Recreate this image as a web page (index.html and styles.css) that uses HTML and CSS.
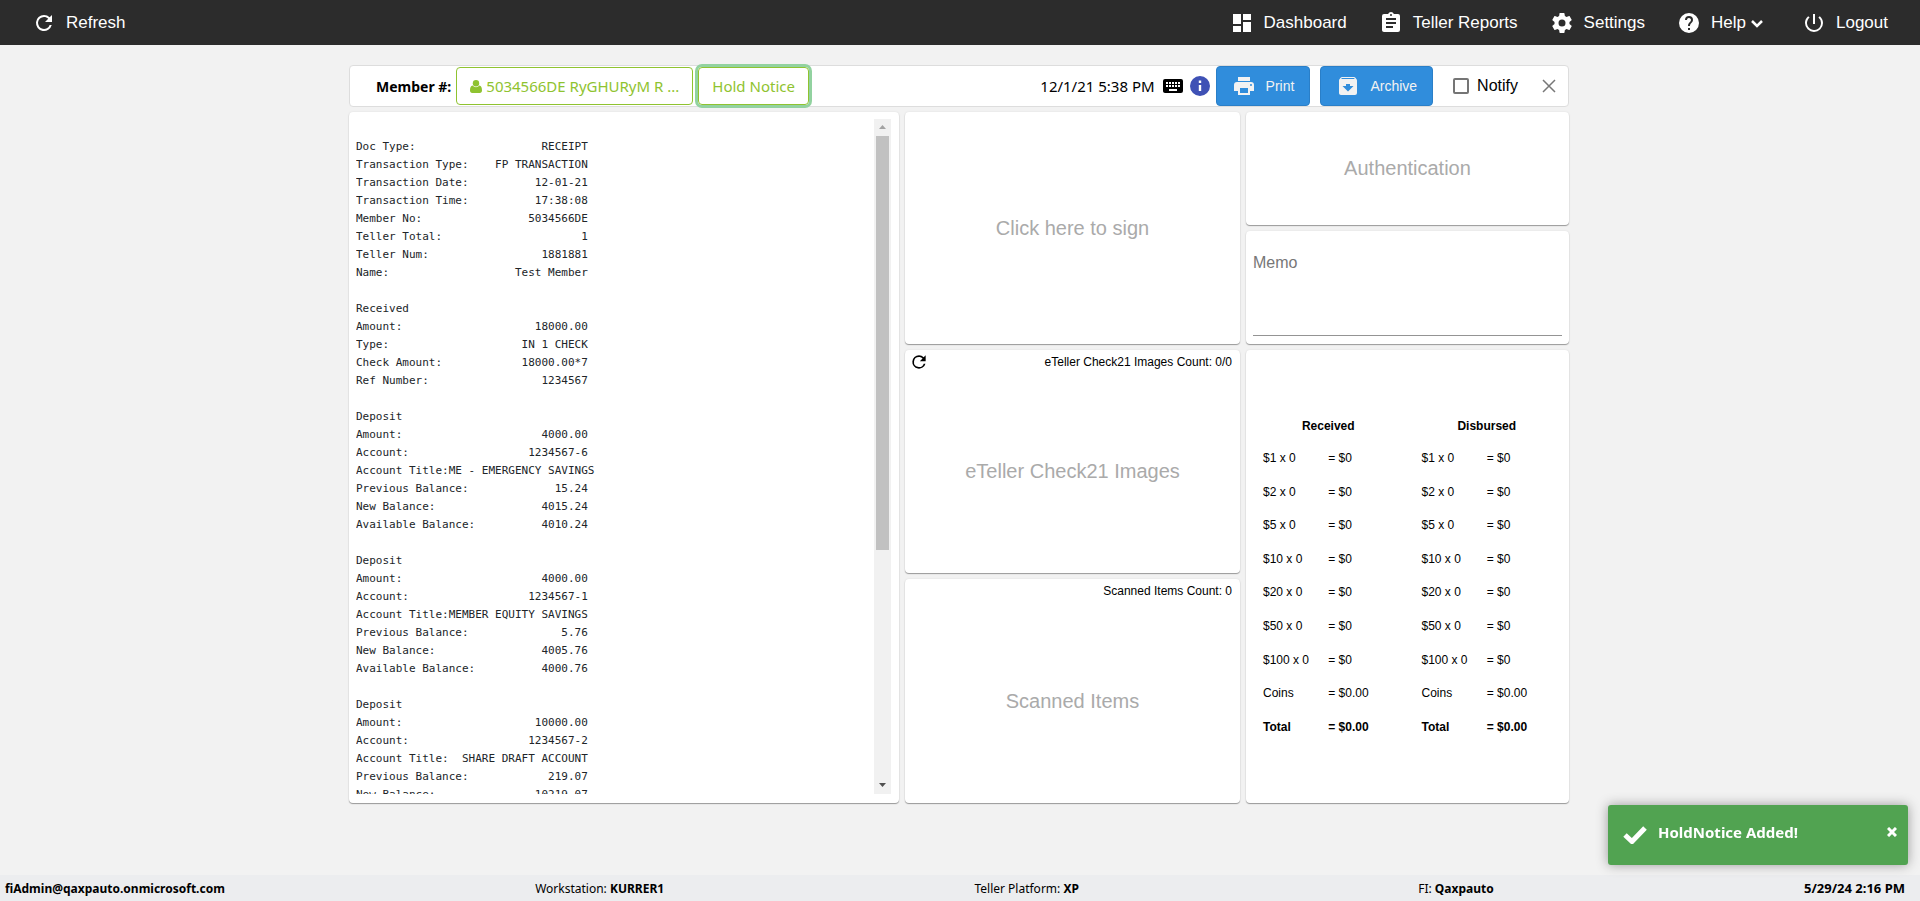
FILE: index.html
```html
<!DOCTYPE html>
<html lang="en">
<head>
<meta charset="utf-8">
<title>Teller Receipt</title>
<link rel="stylesheet" href="styles.css">
</head>
<body>
<header class="topbar">
  <button class="nav-item" type="button"><svg class="icon" viewBox="0 0 24 24"><path d="M17.65 6.35A7.96 7.96 0 0 0 12 4a8 8 0 1 0 7.73 10h-2.08A6 6 0 1 1 12 6c1.66 0 3.14.69 4.22 1.78L13 11h7V4z"/></svg>Refresh</button>
  <nav class="nav">
    <a class="nav-item" href="#"><svg class="icon" viewBox="0 0 24 24"><path d="M3 13h8V3H3v10zm0 8h8v-6H3v6zm10 0h8V11h-8v10zm0-18v6h8V3h-8z"/></svg>Dashboard</a>
    <a class="nav-item" href="#"><svg class="icon" viewBox="0 0 24 24"><path d="M19 3h-4.18C14.4 1.84 13.3 1 12 1s-2.4.84-2.82 2H5a2 2 0 0 0-2 2v14c0 1.100.9 2 2 2h14a2 2 0 0 0 2-2V5a2 2 0 0 0-2-2zm-7 0a1 1 0 1 1 0 2 1 1 0 0 1 0-2zm2 14H7v-2h7v2zm3-4H7v-2h10v2zm0-4H7V7h10v2z"/></svg>Teller Reports</a>
    <a class="nav-item" href="#"><svg class="icon" viewBox="0 0 24 24"><path d="M19.430 12.980c.04-.32.07-.64.07-.98s-.03-.66-.07-.98l2.110-1.650c.19-.15.24-.42.12-.64l-2-3.460c-.12-.22-.39-.3-.61-.22l-2.490 1c-.52-.4-1.080-.73-1.690-.98l-.38-2.650A.49.49 0 0 0 14 2h-4c-.25 0-.46.18-.49.42l-.38 2.650c-.61.25-1.170.59-1.690.98l-2.490-1c-.23-.09-.49 0-.61.22l-2 3.460c-.13.22-.07.49.12.64l2.110 1.650c-.04.32-.07.65-.07.98s.03.66.07.98l-2.110 1.650c-.19.15-.24.42-.12.64l2 3.460c.12.22.39.3.61.22l2.490-1c.52.4 1.080.73 1.690.98l.38 2.650c.03.24.24.42.49.42h4c.25 0 .46-.18.49-.42l.38-2.650c.61-.25 1.170-.59 1.690-.98l2.490 1c.23.09.49 0 .61-.22l2-3.460c.12-.22.07-.49-.12-.64l-2.110-1.650zM12 15.500a3.500 3.500 0 1 1 0-7 3.500 3.500 0 0 1 0 7z"/></svg>Settings</a>
    <a class="nav-item" href="#"><svg class="icon" viewBox="0 0 24 24"><path d="M12 2a10 10 0 1 0 0 20 10 10 0 0 0 0-20zm1 17h-2v-2h2v2zm2.070-7.750l-.9.92C13.450 12.900 13 13.500 13 15h-2v-.5c0-1.100.45-2.100 1.170-2.830l1.240-1.260A2 2 0 1 0 10 9H8a4 4 0 1 1 8 0c0 .88-.36 1.680-.93 2.250z"/></svg>Help<svg class="chevron" viewBox="0 0 14 10"><path d="M2 2l5 5 5-5"/></svg></a>
    <a class="nav-item" href="#"><svg class="icon" viewBox="0 0 24 24"><path d="M13 3h-2v10h2V3zm4.830 2.170l-1.420 1.420A6.920 6.920 0 0 1 19 12a7 7 0 1 1-11.420-5.420L6.170 5.170A8.930 8.930 0 0 0 3 12a9 9 0 1 0 18 0c0-2.740-1.230-5.180-3.170-6.830z"/></svg>Logout</a>
  </nav>
</header>

<main class="main">
  <section class="toolbar">
    <span class="member-label">Member #:</span>
    <button class="outline-btn member-btn" type="button"><svg class="user" viewBox="0 0 12 13"><circle cx="6" cy="3.200" r="3.200"/><path d="M2.600 5.600C.8 5.800 0 7.800 0 10.600 0 12 .9 13 2.200 13h7.600c1.300 0 2.200-1 2.200-2.400 0-2.800-.8-4.800-2.600-5a4.400 4.400 0 0 1-6.800 0z"/></svg>5034566DE RyGHURyM R ...</button>
    <button class="outline-btn focused" type="button">Hold Notice</button>
    <span class="date">12/1/21 5:38 PM</span>
    <svg class="icon keyboard" viewBox="0 0 24 24"><path d="M20 5H4a2 2 0 0 0-2 2v10c0 1.100.9 2 2 2h16a2 2 0 0 0 2-2V7a2 2 0 0 0-2-2zm-9 3h2v2h-2V8zm0 3h2v2h-2v-2zM8 8h2v2H8V8zm0 3h2v2H8v-2zm-1 2H5v-2h2v2zm0-3H5V8h2v2zm9 7H8v-2h8v2zm0-4h-2v-2h2v2zm0-3h-2V8h2v2zm3 3h-2v-2h2v2zm0-3h-2V8h2v2z"/></svg>
    <svg class="icon info" viewBox="0 0 24 24"><path d="M12 2a10 10 0 1 0 0 20 10 10 0 0 0 0-20zm1.200 15h-2.400v-6h2.400v6zm0-8h-2.400V6.600h2.400V9z"/></svg>
    <button class="blue-btn" type="button"><svg class="icon" viewBox="0 0 24 24"><path d="M19 8H5a3 3 0 0 0-3 3v6h4v4h12v-4h4v-6a3 3 0 0 0-3-3zm-3 11H8v-5h8v5zm3-7a1 1 0 1 1 0-2 1 1 0 0 1 0 2zm-1-9H6v4h12V3z"/></svg>Print</button>
    <button class="blue-btn archive" type="button"><svg class="icon" viewBox="0 0 24 24"><path d="M20.540 5.230l-1.390-1.680A1.450 1.450 0 0 0 18 3H6c-.47 0-.88.21-1.160.55L3.460 5.230C3.170 5.570 3 6.020 3 6.500V19c0 1.100.9 2 2 2h14a2 2 0 0 0 2-2V6.500c0-.48-.17-.93-.46-1.270zM12 17.500L6.500 12H10v-2h4v2h3.500L12 17.500zM5.120 5l.81-1h12l.94 1H5.120z"/></svg>Archive</button>
    <label class="notify"><input class="check" type="checkbox">Notify</label>
    <button class="close" type="button" aria-label="Close"><svg class="close-icon" viewBox="0 0 14 14"><path d="M1 1l12 12M13 1L1 13"/></svg></button>
  </section>

  <div class="panels">
    <section class="panel receipt">
<pre class="receipt-text">

Doc Type:                   RECEIPT
Transaction Type:    FP TRANSACTION
Transaction Date:          12-01-21
Transaction Time:          17:38:08
Member No:                5034566DE
Teller Total:                     1
Teller Num:                 1881881
Name:                   Test Member

Received
Amount:                    18000.00
Type:                    IN 1 CHECK
Check Amount:            18000.00*7
Ref Number:                 1234567

Deposit
Amount:                     4000.00
Account:                  1234567-6
Account Title:ME - EMERGENCY SAVINGS
Previous Balance:             15.24
New Balance:                4015.24
Available Balance:          4010.24

Deposit
Amount:                     4000.00
Account:                  1234567-1
Account Title:MEMBER EQUITY SAVINGS
Previous Balance:              5.76
New Balance:                4005.76
Available Balance:          4000.76

Deposit
Amount:                    10000.00
Account:                  1234567-2
Account Title:  SHARE DRAFT ACCOUNT
Previous Balance:            219.07
New Balance:               10219.07
</pre>
      <div class="scrollbar">
        <svg class="arrow up" viewBox="0 0 17 17"><path d="M5 10l3.500-4 3.500 4z"/></svg>
        <div class="track"><div class="thumb"></div></div>
        <svg class="arrow" viewBox="0 0 17 17"><path d="M5 6h7l-3.500 4z"/></svg>
      </div>
    </section>

    <section class="panel sign"><span class="hint">Click here to sign</span></section>

    <section class="panel auth"><span class="hint">Authentication</span></section>

    <section class="panel memo"><textarea class="memo-input" placeholder="Memo" aria-label="Memo"></textarea></section>

    <section class="panel images">
      <div class="panel-head"><button class="reload" type="button" aria-label="Reload images"><svg class="reload-icon" viewBox="0 0 24 24"><path d="M17.650 6.350A7.960 7.960 0 0 0 12 4a8 8 0 1 0 7.730 10h-2.080A6 6 0 1 1 12 6c1.660 0 3.140.69 4.220 1.780L13 11h7V4z"/></svg></button><span class="count">eTeller Check21 Images Count: 0/0</span></div>
      <span class="hint">eTeller Check21 Images</span>
    </section>

    <section class="panel scanned">
      <div class="panel-head"><span class="count">Scanned Items Count: 0</span></div>
      <span class="hint">Scanned Items</span>
    </section>

    <section class="panel cash">
      <table class="cash-table">
        <thead><tr><th colspan="2">Received</th><th colspan="2">Disbursed</th></tr></thead>
        <tbody>
          <tr><td>$1 x 0</td><td>= $0</td><td>$1 x 0</td><td>= $0</td></tr>
          <tr><td>$2 x 0</td><td>= $0</td><td>$2 x 0</td><td>= $0</td></tr>
          <tr><td>$5 x 0</td><td>= $0</td><td>$5 x 0</td><td>= $0</td></tr>
          <tr><td>$10 x 0</td><td>= $0</td><td>$10 x 0</td><td>= $0</td></tr>
          <tr><td>$20 x 0</td><td>= $0</td><td>$20 x 0</td><td>= $0</td></tr>
          <tr><td>$50 x 0</td><td>= $0</td><td>$50 x 0</td><td>= $0</td></tr>
          <tr><td>$100 x 0</td><td>= $0</td><td>$100 x 0</td><td>= $0</td></tr>
          <tr><td>Coins</td><td>= $0.00</td><td>Coins</td><td>= $0.00</td></tr>
          <tr class="total"><td>Total</td><td>= $0.00</td><td>Total</td><td>= $0.00</td></tr>
        </tbody>
      </table>
    </section>
  </div>
</main>

<footer class="footer">
  <b>fiAdmin@qaxpauto.onmicrosoft.com</b>
  <span>Workstation: <b>KURRER1</b></span>
  <span class="platform">Teller Platform: <b>XP</b></span>
  <span>FI: <b>Qaxpauto</b></span>
  <b class="clock">5/29/24 2:16 PM</b>
</footer>

<div class="toast" role="status">
  <svg class="tick" viewBox="0 0 24 18"><path d="M2 9l7 6.500L22 2"/></svg>
  <span class="toast-text">HoldNotice Added!</span>
  <button class="toast-close" type="button" aria-label="Dismiss"><svg class="toast-x" viewBox="0 0 10 10"><path d="M1 1l8 8M9 1L1 9"/></svg></button>
</div>
</body>
</html>
```
FILE: styles.css
```css
* {
  box-sizing: border-box;
}

body {
  margin: 0;
  height: 100vh;
  display: flex;
  flex-direction: column;
  overflow: hidden;
  background: #f2f2f2;
  color: #000;
  font-family: "Liberation Sans", Arial, sans-serif;
  font-size: 16px;
}

button {
  font: inherit;
  color: inherit;
  background: none;
  border: 0;
  padding: 0;
}

.icon {
  width: 24px;
  height: 24px;
  flex: none;
  fill: currentColor;
}

.topbar {
  height: 45px;
  flex: none;
  display: flex;
  align-items: center;
  justify-content: space-between;
  padding: 0 32px;
  background: #2c2c2c;
  color: #fff;
}

.nav {
  display: flex;
  gap: 32px;
}

.nav-item {
  display: flex;
  align-items: center;
  gap: 10px;
  color: #fff;
  font-size: 17px;
  text-decoration: none;
}

.chevron {
  width: 14px;
  height: 10px;
  margin: 2px 6px 0 -6px;
  fill: none;
  stroke: #fff;
  stroke-width: 2.500;
}

.main {
  flex: 1;
  min-height: 0;
  width: 100%;
  max-width: 1222px;
  margin: 0 auto;
  padding: 20px 2px 72px 0;
  display: flex;
  flex-direction: column;
  gap: 5px;
}

.toolbar {
  height: 42px;
  flex: none;
  display: flex;
  align-items: center;
  padding: 0 12px 0 26px;
  background: #fff;
  border: 1px solid #ddd;
  border-radius: 4px;
  font-family: "Noto Sans", sans-serif;
  font-size: 15px;
}

.member-label {
  font-size: 14px;
  font-weight: bold;
  margin-right: 5px;
}

.outline-btn {
  height: 38px;
  padding: 0 13px;
  display: flex;
  align-items: center;
  gap: 4px;
  border: 1px solid #8fc330;
  border-radius: 4px;
  color: #8fc330;
  white-space: nowrap;
}

.member-btn {
  margin-right: 5px;
}

.focused {
  box-shadow: 0 0 0 3px #92d2a0;
}

.user {
  width: 12px;
  height: 13px;
  fill: #8fc330;
}

.date {
  margin-left: auto;
}

.keyboard {
  margin: 0 3px 0 6px;
}

.info {
  color: #3f51b5;
  margin-right: 4px;
}

.blue-btn {
  height: 40px;
  padding: 0 15px;
  display: flex;
  align-items: center;
  gap: 10px;
  background: #308ddc;
  border: 1px solid #2a7fc8;
  border-radius: 4px;
  color: #f2f2f2;
  font-family: "Liberation Sans", Arial, sans-serif;
  font-size: 14px;
}

.archive {
  margin-left: 10px;
}

.notify {
  display: flex;
  align-items: center;
  gap: 8px;
  margin: 0 24px 0 20px;
  font-family: "Liberation Sans", Arial, sans-serif;
  font-size: 16px;
}

.check {
  appearance: none;
  width: 16px;
  height: 16px;
  margin: 0;
  border: 2px solid #757575;
  border-radius: 2px;
}

.close {
  display: flex;
}

.close-icon {
  width: 14px;
  height: 14px;
  stroke: #777;
  stroke-width: 1.500;
}

.panels {
  flex: 1;
  min-height: 0;
  display: grid;
  grid-template-columns: 550fr 335fr 323fr;
  grid-template-rows: 113fr 113fr 223fr 224fr;
  gap: 6px;
}

.panel {
  min-width: 0;
  min-height: 0;
  display: flex;
  flex-direction: column;
  align-items: center;
  justify-content: center;
  background: #fff;
  border-radius: 4px;
  box-shadow: 0 1px 1px #999, 0 0 2px #ddd;
  overflow: hidden;
}

.receipt {
  grid-row: 1 / 5;
  flex-direction: row;
  align-items: stretch;
  padding: 7px 8px 9px 7px;
}

.sign {
  grid-area: 1 / 2 / 3 / 3;
}

.auth {
  grid-area: 1 / 3;
}

.memo {
  grid-area: 2 / 3;
  padding: 8px 7px;
}

.images {
  grid-area: 3 / 2;
}

.scanned {
  grid-area: 4 / 2;
}

.cash {
  grid-area: 3 / 3 / 5 / 4;
  padding: 0 3px;
}

.receipt-text {
  flex: 1;
  min-width: 0;
  margin: 0;
  padding-top: 1px;
  overflow: hidden;
  font-family: "DejaVu Sans Mono", monospace;
  font-size: 11px;
  line-height: 18px;
  color: #212529;
}

.scrollbar {
  width: 17px;
  display: flex;
  flex-direction: column;
  background: #f1f1f1;
}

.arrow {
  width: 17px;
  height: 17px;
  fill: #505050;
}

.up {
  fill: #a3a3a3;
}

.track {
  flex: 1;
  display: grid;
  grid-template-rows: 414fr 227fr;
  padding: 0 2px;
}

.thumb {
  background: #c1c1c1;
}

.hint {
  margin: auto;
  font-size: 20px;
  color: #aaa;
}

.panel-head {
  width: 100%;
  height: 24px;
  flex: none;
  display: flex;
  align-items: center;
  padding: 0 8px 0 4px;
  margin-bottom: -4px;
}

.reload {
  display: flex;
}

.reload-icon {
  width: 20px;
  height: 20px;
}

.count {
  margin-left: auto;
  font-size: 12px;
}

.memo-input {
  flex: 1;
  width: 100%;
  padding: 15px 0 0;
  border: 0;
  border-bottom: 1px solid #949494;
  outline: 0;
  resize: none;
  background: none;
  font: inherit;
}

.memo-input::placeholder {
  color: #777;
}

.cash-table {
  width: 100%;
  height: 334px;
  table-layout: fixed;
  border-collapse: collapse;
  font-size: 12px;
}

.cash-table th,
.cash-table td {
  padding: 0;
}

.cash-table th {
  height: 32px;
}

.cash-table td:nth-child(odd) {
  padding-left: 14px;
}

.total {
  font-weight: bold;
}

.footer {
  height: 26px;
  flex: none;
  display: flex;
  align-items: center;
  justify-content: space-between;
  padding: 0 15px 0 5px;
  background: #ecedef;
  font-family: "Noto Sans", sans-serif;
  font-size: 12px;
}

.platform {
  padding-right: 29px;
}

.clock {
  font-size: 13px;
}

.toast {
  position: fixed;
  right: 12px;
  bottom: 36px;
  width: 300px;
  height: 60px;
  display: flex;
  align-items: flex-start;
  padding: 15px 11px 15px 15px;
  background: #51a351;
  border-radius: 3px;
  box-shadow: 0 0 12px #999;
  color: #fff;
  font-family: "Noto Sans", sans-serif;
  font-size: 15px;
  font-weight: bold;
  line-height: 24px;
}

.tick {
  width: 24px;
  height: 18px;
  margin: 6px 11px 0 0;
  fill: none;
  stroke: #fff;
  stroke-width: 5;
}

.toast-close {
  display: flex;
  margin: 7px 0 0 auto;
}

.toast-x {
  width: 10px;
  height: 10px;
  stroke: #fff;
  stroke-width: 3;
}
```
